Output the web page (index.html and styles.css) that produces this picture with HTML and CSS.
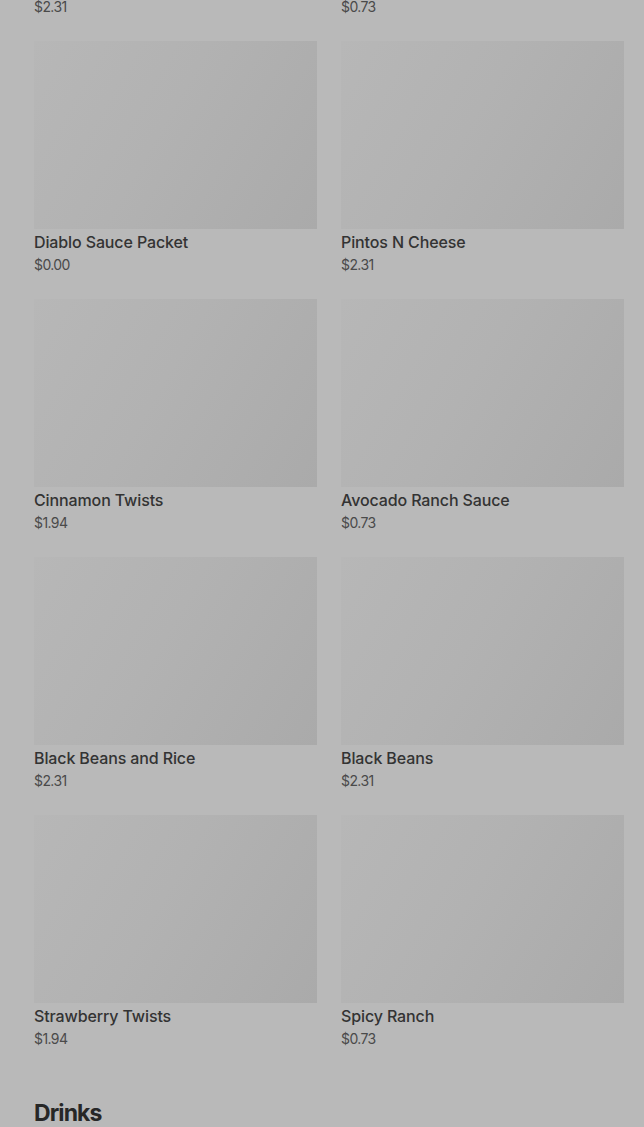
FILE: index.html
```html
<!DOCTYPE html>
<html lang="en">
<head>
<meta charset="utf-8">
<title>Menu</title>
<link rel="stylesheet" href="styles.css">
</head>
<body>
<main class="page">
  <section class="section">
    <div class="grid">
      <div class="card"><div class="thumb"></div><div class="name">Chips and Guacamole</div><div class="price">$2.31</div></div>
      <div class="card"><div class="thumb"></div><div class="name">Mild Sauce Packet</div><div class="price">$0.73</div></div>
      <div class="card"><div class="thumb"></div><div class="name">Diablo Sauce Packet</div><div class="price">$0.00</div></div>
      <div class="card"><div class="thumb"></div><div class="name">Pintos N Cheese</div><div class="price">$2.31</div></div>
      <div class="card"><div class="thumb"></div><div class="name">Cinnamon Twists</div><div class="price">$1.94</div></div>
      <div class="card"><div class="thumb"></div><div class="name">Avocado Ranch Sauce</div><div class="price">$0.73</div></div>
      <div class="card"><div class="thumb"></div><div class="name">Black Beans and Rice</div><div class="price">$2.31</div></div>
      <div class="card"><div class="thumb"></div><div class="name">Black Beans</div><div class="price">$2.31</div></div>
      <div class="card"><div class="thumb"></div><div class="name">Strawberry Twists</div><div class="price">$1.94</div></div>
      <div class="card"><div class="thumb"></div><div class="name">Spicy Ranch</div><div class="price">$0.73</div></div>
    </div>
  </section>
  <section class="section">
    <h2 class="section-title">Drinks</h2>
  </section>
</main>
</body>
</html>
```

FILE: styles.css
```css
html, body {
  margin: 0;
  padding: 0;
  background: #b9b9b9;
  overflow: hidden;
}
body {
  font-family: Inter, "Noto Sans", "Liberation Sans", sans-serif;
  color: #2f2f2f;
}
.page {
  margin-top: -217px;
  padding: 0 20px 0 34px;
}
.grid {
  display: grid;
  grid-template-columns: 283px 283px;
  column-gap: 24px;
  row-gap: 24px;
}
.card {
  display: flex;
  flex-direction: column;
}
.thumb {
  height: 188px;
  background: linear-gradient(120deg, #b7b7b7 0%, #b2b2b2 45%, #aaaaaa 100%);
}
.name {
  margin-top: 3px;
  font-size: 16px;
  line-height: 20px;
  font-weight: 500;
  letter-spacing: -0.12px;
  color: #333333;
}
.price {
  margin-top: 3px;
  font-size: 14px;
  line-height: 20px;
  font-weight: 400;
  color: #4a4a4a;
  letter-spacing: -0.6px;
}
.section-title {
  margin: 48px 0 0;
  font-size: 23px;
  line-height: 32px;
  font-weight: 700;
  letter-spacing: -0.9px;
  color: #272727;
}
```
